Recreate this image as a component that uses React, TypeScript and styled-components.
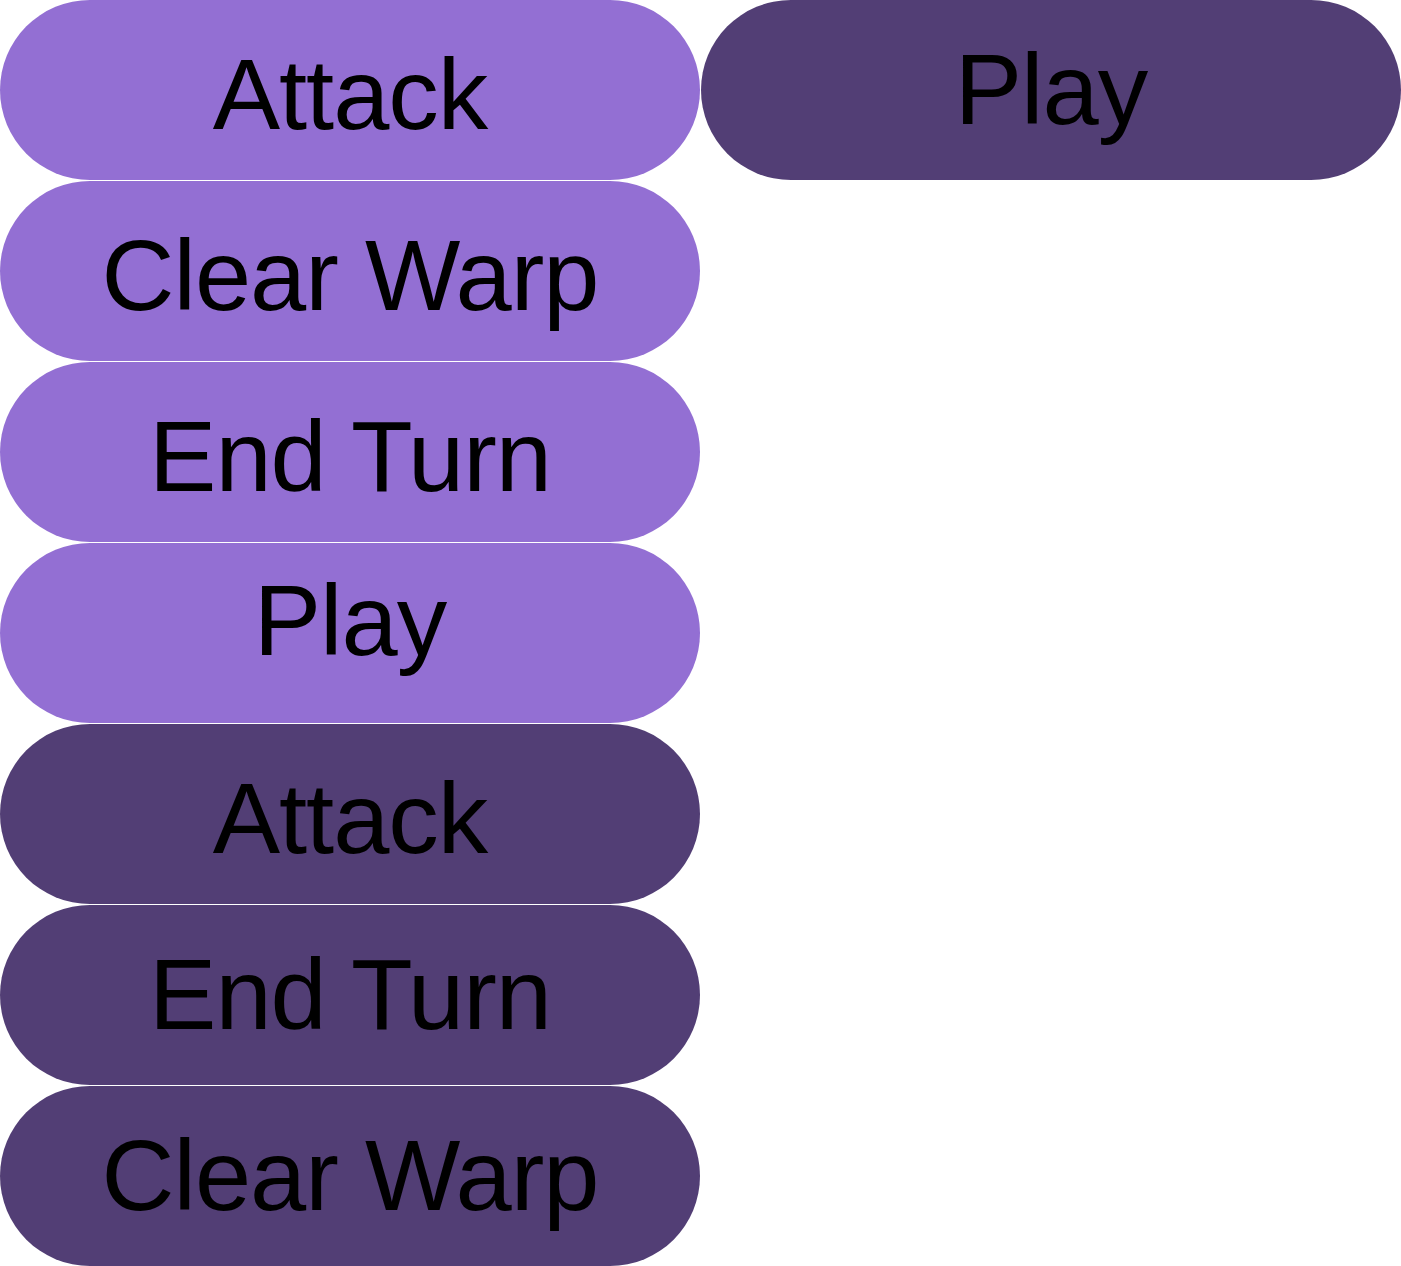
import React from 'react';
import styled, { createGlobalStyle } from 'styled-components';

const GlobalStyle = createGlobalStyle`
    html, body {
        margin: 0;
        padding: 0;
        background: #ffffff;
    }
`;

const ButtonGrid = styled.div`
    display: grid;
    grid-auto-flow: column;
    grid-template-rows: repeat(7, 180px);
    grid-auto-columns: 700px;
    gap: 1px;
`;

// $lift nudges the label up from its default spot, in px
const ActionButton = styled.button<{ $variant: 'light' | 'dark'; $lift?: number }>`
    display: flex;
    align-items: center;
    justify-content: center;
    width: 700px;
    height: 180px;
    margin: 0;
    padding: 8px 0 ${props => (props.$lift || 0) * 2}px;
    border: none;
    border-radius: 90px;
    background: ${props => (props.$variant === 'light' ? '#936fd3' : '#523e75')};
    color: #000000;
    font-family: 'Liberation Sans', Arial, sans-serif;
    font-size: 101px;
    letter-spacing: -1px;
    line-height: 1;
    cursor: pointer;
`;

const buttons: Array<{ id: number; label: string; variant: 'light' | 'dark'; lift?: number }> = [
    { id: 1, label: 'Attack', variant: 'light' },
    { id: 2, label: 'Clear Warp', variant: 'light' },
    { id: 3, label: 'End Turn', variant: 'light' },
    { id: 4, label: 'Play', variant: 'light', lift: 17 },
    { id: 5, label: 'Attack', variant: 'dark' },
    { id: 6, label: 'End Turn', variant: 'dark', lift: 5 },
    { id: 7, label: 'Clear Warp', variant: 'dark', lift: 5 },
    { id: 8, label: 'Play', variant: 'dark', lift: 5 },
];

const App: React.FunctionComponent = () => (
    <>
        <GlobalStyle />
        <ButtonGrid>
            {buttons.map(button => (
                <ActionButton key={button.id} $variant={button.variant} $lift={button.lift}>
                    {button.label}
                </ActionButton>
            ))}
        </ButtonGrid>
    </>
);

export default App;
